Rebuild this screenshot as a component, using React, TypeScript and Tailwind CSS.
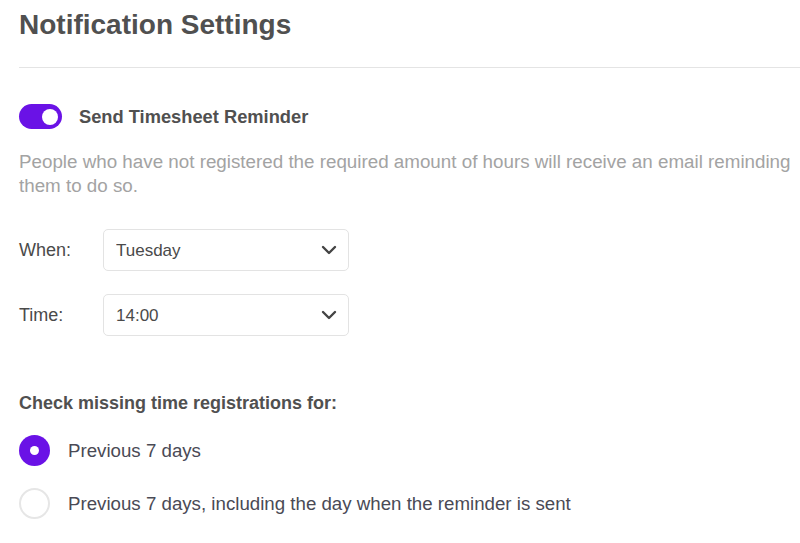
import { useState } from 'react';

const DAYS = ['Monday', 'Tuesday', 'Wednesday', 'Thursday', 'Friday'];
const TIMES = ['09:00', '12:00', '14:00', '17:00'];

function Chevron() {
  return (
    <svg width="16" height="10" viewBox="0 0 16 10" fill="none" className="text-[#444]">
      <path d="M2 2l6 6 6-6" stroke="currentColor" strokeWidth="2.4" strokeLinecap="round" strokeLinejoin="round" />
    </svg>
  );
}

function SelectRow({ label, value, options, onChange }: { label: string; value: string; options: string[]; onChange: (v: string) => void }) {
  return (
    <div className="flex items-center">
      <span className="w-[84px] text-[18px] text-[#4a4a4a]">{label}</span>
      <div className="relative h-[42px] w-[246px]">
        <select
          value={value}
          onChange={(e) => onChange(e.target.value)}
          className="h-full w-full appearance-none rounded-[5px] border border-[#e3e3e3] bg-white pl-[12px] text-[17px] text-[#4a4a4a] outline-none"
        >
          {options.map((o) => (
            <option key={o}>{o}</option>
          ))}
        </select>
        <span className="pointer-events-none absolute right-[12px] top-[16px]">
          <Chevron />
        </span>
      </div>
    </div>
  );
}

function Radio({ checked, label, onClick }: { checked: boolean; label: string; onClick: () => void }) {
  return (
    <button type="button" onClick={onClick} className="flex items-center gap-[18px] text-left">
      {checked ? (
        <span className="flex h-[31px] w-[31px] items-center justify-center rounded-full bg-[#6a12e6]">
          <span className="h-[9px] w-[9px] rounded-full bg-white" />
        </span>
      ) : (
        <span className="h-[31px] w-[31px] rounded-full border-2 border-[#e6e6e6] bg-white" />
      )}
      <span className="text-[18.7px] text-[#4a4a55]">{label}</span>
    </button>
  );
}

export default function App() {
  const [enabled, setEnabled] = useState(true);
  const [day, setDay] = useState('Tuesday');
  const [time, setTime] = useState('14:00');
  const [range, setRange] = useState(0);

  return (
    <div className="min-h-[543px] overflow-hidden bg-white pl-[19px] font-['Liberation_Sans',Arial,sans-serif]">
      <h1 className="pt-[7px] text-[28px] font-semibold leading-[36px] text-[#505050]">Notification Settings</h1>
      <div className="mt-[24px] h-px w-[800px] bg-[#e4e4e4]" />

      <div className="mt-[35px] flex items-center gap-[17px]">
        <button
          type="button"
          onClick={() => setEnabled(!enabled)}
          className={`flex h-[25px] w-[43px] items-center rounded-full px-[4px] ${enabled ? 'justify-end bg-[#6a12e6]' : 'justify-start bg-[#d6d6d6]'}`}
        >
          <span className="h-[16px] w-[16px] rounded-full bg-white" />
        </button>
        <span className="text-[18.3px] font-semibold text-[#505050]">Send Timesheet Reminder</span>
      </div>

      <p className="mt-[20px] w-[781px] text-[18.8px] leading-[24px] text-[#a3a3a3]">
        People who have not registered the required amount of hours will receive an email reminding them to do so.
      </p>

      <div className="mt-[31px] flex flex-col gap-[23px]">
        <SelectRow label="When:" value={day} options={DAYS} onChange={setDay} />
        <SelectRow label="Time:" value={time} options={TIMES} onChange={setTime} />
      </div>

      <p className="mt-[54px] text-[18px] font-semibold text-[#505050]">Check missing time registrations for:</p>

      <div className="mt-[18px] flex flex-col gap-[22px]">
        <Radio checked={range === 0} label="Previous 7 days" onClick={() => setRange(0)} />
        <Radio checked={range === 1} label="Previous 7 days, including the day when the reminder is sent" onClick={() => setRange(1)} />
      </div>
    </div>
  );
}
